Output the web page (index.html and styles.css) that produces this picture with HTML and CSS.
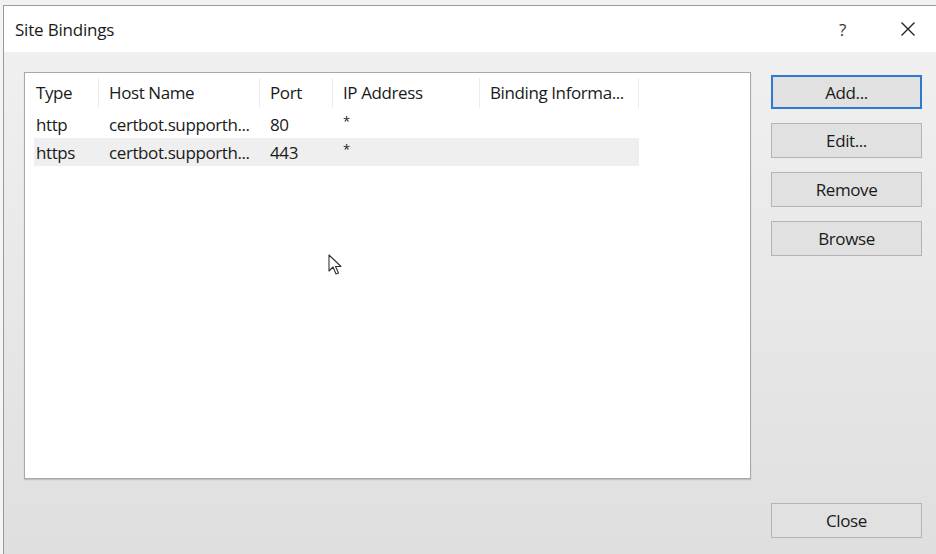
FILE: index.html
```html
<!DOCTYPE html>
<html>
<head>
<meta charset="utf-8">
<link rel="stylesheet" href="styles.css">
</head>
<body>
<div class="strip"></div>
<div class="dialog">
  <div class="titlebar">
    <span class="title">Site Bindings</span>
    <span class="help">?</span>
    <span class="close-x">
      <svg width="16" height="16" viewBox="0 0 16 16"><path d="M1.5 1.5 L14.5 14.5 M14.5 1.5 L1.5 14.5" stroke="#222" stroke-width="1.4" fill="none"/></svg>
    </span>
  </div>
  <div class="body">
    <div class="main">
      <div class="list">
        <div class="row head">
          <div class="c c1">Type</div>
          <div class="c c2">Host Name</div>
          <div class="c c3">Port</div>
          <div class="c c4">IP Address</div>
          <div class="c c5">Binding Informa...</div>
        </div>
        <div class="row">
          <div class="c c1">http</div>
          <div class="c c2">certbot.supporth...</div>
          <div class="c c3">80</div>
          <div class="c c4 star">*</div>
          <div class="c c5"></div>
        </div>
        <div class="row sel">
          <div class="c c1">https</div>
          <div class="c c2">certbot.supporth...</div>
          <div class="c c3">443</div>
          <div class="c c4 star">*</div>
          <div class="c c5"></div>
        </div>
      </div>
      <div class="buttons">
        <button class="btn default">Add...</button>
        <button class="btn">Edit...</button>
        <button class="btn">Remove</button>
        <button class="btn">Browse</button>
      </div>
    </div>
    <div class="footer">
      <button class="btn">Close</button>
    </div>
  </div>
  <svg class="cursor" width="16" height="24" viewBox="0 0 16 24"><path d="M1 1 L1 17 L5 13 L8 20 L10.5 19 L7.5 12.5 L13 12.5 Z" fill="#fff" stroke="#333" stroke-width="1.1" stroke-linejoin="round"/></svg>
</div>
</body>
</html>
```
FILE: styles.css
```css
html, body {
  margin: 0;
  padding: 0;
}
body {
  width: 936px;
  height: 554px;
  overflow: hidden;
  background: #f4f4f4;
  font-family: "Open Sans", "Noto Sans", sans-serif;
  color: #1a1a1a;
}
.strip {
  height: 5px;
  background: #f2f2f2;
}
.dialog {
  position: relative;
  margin-left: 3px;
  height: 549px;
  border-top: 1px solid #9a9a9a;
  border-left: 1px solid #9a9a9a;
  display: flex;
  flex-direction: column;
  box-sizing: border-box;
}
.titlebar {
  height: 46px;
  background: #fff;
  display: flex;
  align-items: center;
  padding-left: 11px;
  flex-shrink: 0;
}
.title {
  font-size: 17px;
  flex: 1;
  letter-spacing: -0.2px;
}
.help {
  font-size: 17px;
  width: 61px;
  color: #333;
}
.close-x {
  width: 36px;
  display: flex;
  align-items: center;
}
.body {
  flex: 1;
  background: linear-gradient(#f0f0f0, #dfdfdf);
  padding: 20px 14px 0 20px;
  display: flex;
  flex-direction: column;
}
.main {
  display: flex;
  gap: 20px;
}
.list {
  width: 727px;
  height: 407px;
  background: #fff;
  border: 1px solid #a8a8a8;
  box-sizing: border-box;
  padding: 5px 0 0 9px;
  box-shadow: 0 1px 1px rgba(0,0,0,0.15);
}
.row {
  display: flex;
  height: 28px;
  align-items: center;
  font-size: 17px;
  letter-spacing: -0.4px;
  width: 605px;
}
.row.head {
  height: 30px;
  margin-bottom: 2px;
}
.row.head .c {
  border-right: 1px solid #ececec;
  height: 30px;
  line-height: 30px;
}
.row.sel {
  background: #efefef;
}
.c {
  padding-left: 2px;
  box-sizing: border-box;
  white-space: nowrap;
  overflow: hidden;
}
.star {
  font-size: 13px;
  position: relative;
  top: -3px;
}
.c1 { width: 65px; }
.c2 { width: 161px; padding-left: 10px; }
.c3 { width: 73px; padding-left: 10px; }
.c4 { width: 147px; padding-left: 10px; }
.c5 { width: 159px; padding-left: 10px; }
.buttons {
  display: flex;
  flex-direction: column;
  gap: 14px;
  padding-top: 3px;
}
.btn {
  width: 151px;
  height: 35px;
  background: #e1e1e1;
  border: 1px solid #b4b4b4;
  font-family: "Open Sans", "Noto Sans", sans-serif;
  font-size: 17px;
  letter-spacing: -0.4px;
  color: #1a1a1a;
  padding: 0;
}
.btn.default {
  border: 2px solid #2b7bd0;
  height: 34px;
}
.footer {
  display: flex;
  justify-content: flex-end;
  margin-top: 24px;
}
.cursor {
  position: absolute;
  left: 324px;
  top: 248px;
}
```
